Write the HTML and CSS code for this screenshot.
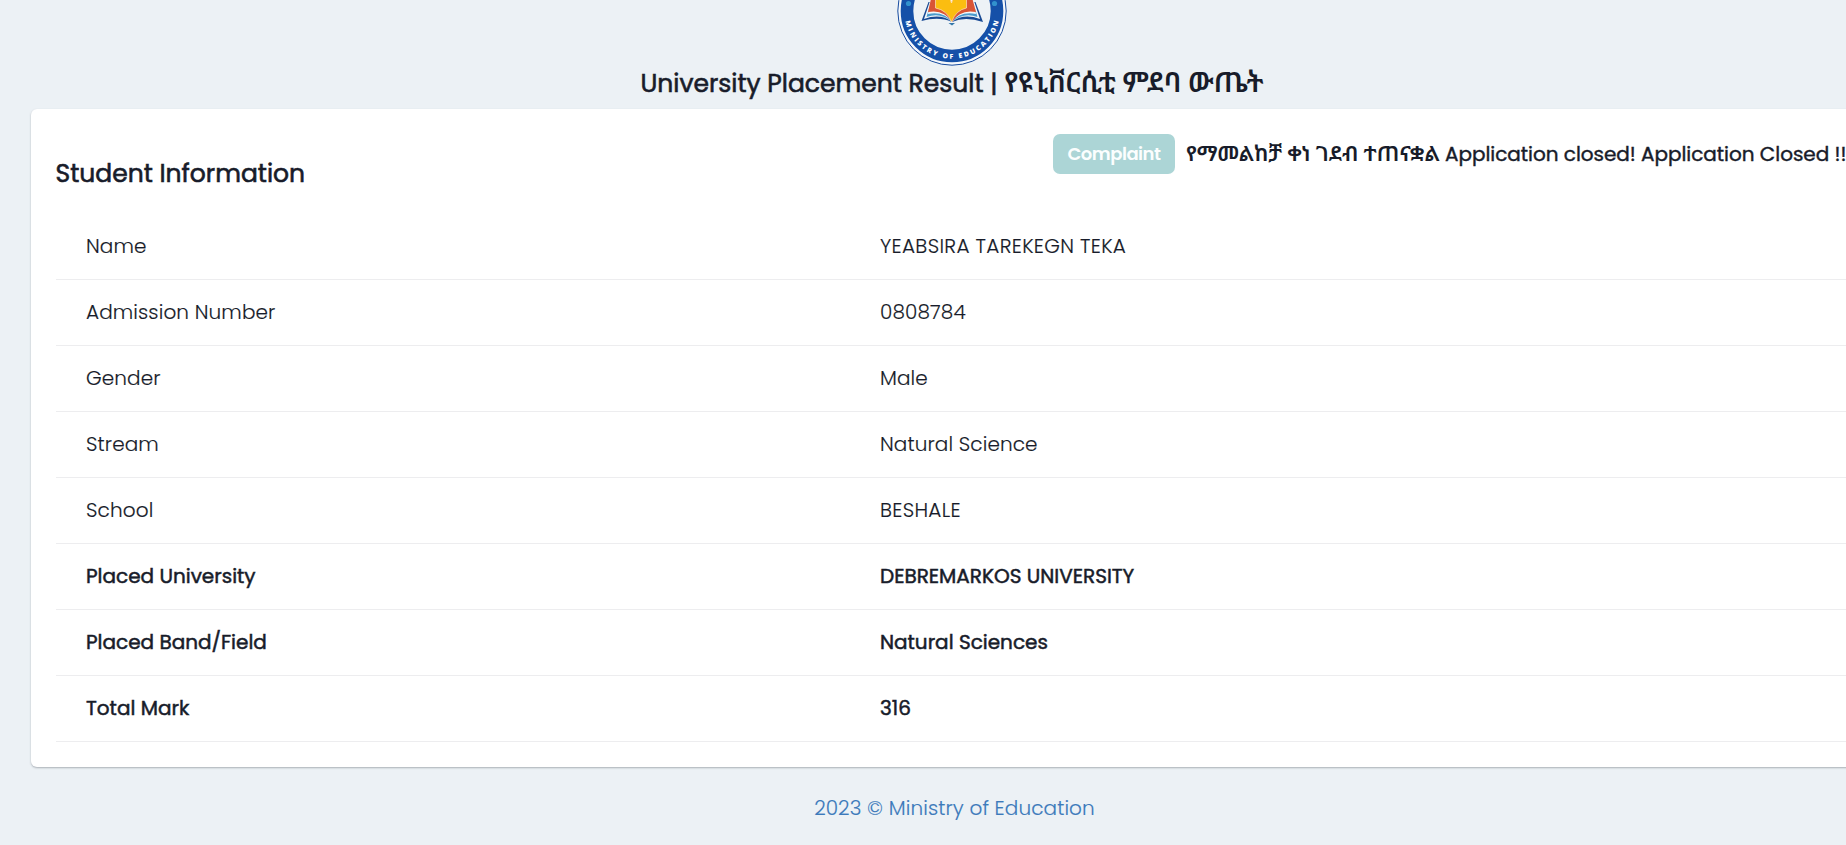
FILE: index.html
```html
<!DOCTYPE html>
<html lang="en">
<head>
<meta charset="utf-8">
<title>University Placement Result</title>
<link rel="stylesheet" href="styles.css">
</head>
<body>
<header class="header">
  <svg class="logo" viewBox="0 0 110 110" aria-label="Ministry of Education">
    <circle cx="55" cy="55" r="54.2" fill="#f5f8fb" stroke="#164b9f" stroke-width="1"/>
    <circle cx="55" cy="55" r="45" fill="#edf2f6" stroke="#1550a8" stroke-width="12.6"/>
    <path d="M24.5 65L31.5 46H78.5L86 66Q68 60 55 66Q42 60 24.5 65Z" fill="#194a94"/>
    <path d="M27 63L33 45H77L83 63Q66 57 55 66Q44 57 27 63Z" fill="#f3f7fa"/>
    <path d="M29.500 61L34 46H76L80.500 61Q66 56 55 66Q44 56 29.500 61Z" fill="#4a9bcd"/>
    <path d="M31 58L35 36H75L79 58Q63 55 55 66Q47 55 31 58Z" fill="#f3f7fa"/>
    <path d="M31 56L36 34H73L79 56Q63 53 55 66Q47 53 31 56Z" fill="#d95435"/>
    <path d="M38.500 52V28Q51 34 54.500 47Q58 34 69.500 28V52Q59 54 54.500 66Q50 54 38.500 52Z" fill="#fbbd10" stroke="#fdeeda" stroke-width=".6"/>
    <path d="M51 34Q53 40 54.500 47Q56 40 58 34Z" fill="#fff7de"/>
    <path d="M51.500 67H58L55 69.500Z" fill="#3478aa"/>
    <circle cx="11.5" cy="47.5" r="2.6" fill="#3291cd"/>
    <circle cx="97.5" cy="47.5" r="2.6" fill="#3291cd"/>
    <path id="ring" d="M7.2 55A47.8 47.8 0 0 0 102.8 55" fill="none"/>
    <text class="logo-text"><textPath href="#ring" startOffset="50%" text-anchor="middle" textLength="129">MINISTRY OF EDUCATION</textPath></text>
  </svg>
  <h1 class="title"><span class="title-en">University Placement Result | </span><span class="title-am">የዩኒቨርሲቲ ምደባ ውጤት</span></h1>
</header>
<main class="card">
  <div class="card-head">
    <h2 class="heading">Student Information</h2>
    <div class="actions">
      <button class="complaint" disabled>Complaint</button>
      <span class="notice"><span class="notice-am">የማመልከቻ ቀነ ገደብ ተጠናቋል </span><span class="notice-en">Application closed! Application Closed !!</span></span>
    </div>
  </div>
  <dl class="table">
    <div class="row"><dt>Name</dt><dd class="caps">YEABSIRA TAREKEGN TEKA</dd></div>
    <div class="row"><dt>Admission Number</dt><dd>0808784</dd></div>
    <div class="row"><dt>Gender</dt><dd>Male</dd></div>
    <div class="row"><dt>Stream</dt><dd>Natural Science</dd></div>
    <div class="row"><dt>School</dt><dd class="caps">BESHALE</dd></div>
    <div class="row strong"><dt>Placed University</dt><dd>DEBREMARKOS UNIVERSITY</dd></div>
    <div class="row strong"><dt>Placed Band/Field</dt><dd>Natural Sciences</dd></div>
    <div class="row strong"><dt>Total Mark</dt><dd>316</dd></div>
  </dl>
</main>
<footer class="footer"><a class="credit">2023 © Ministry of Education</a></footer>
</body>
</html>
```
FILE: styles.css
```css
* { box-sizing: border-box; }
body {
  margin: 0;
  height: 845px;
  overflow: hidden;
  background: #ecf1f5;
  color: #181c2a;
  font-family: Poppins, Inter, "Noto Sans Ethiopic", "Noto Sans", sans-serif;
  font-size: 20px;
  font-weight: 300;
}
.header {
  display: flex;
  flex-direction: column;
  align-items: center;
  width: 1904px;
  margin-top: -44px;
}
.logo { width: 110px; height: 110px; }
.logo-text { font: 800 6.8px "Open Sans", sans-serif; fill: #fff; }
.title {
  margin: 0;
  height: 43px;
  line-height: 36px;
  font-size: 25px;
  font-weight: 400;
  white-space: pre;
  -webkit-text-stroke: .6px currentColor;
}
.title-am { font-size: 28px; font-weight: 600; line-height: 30px; -webkit-text-stroke: 0; }
.card {
  width: 1843px;
  height: 658px;
  margin-left: 31px;
  padding: 25px;
  background: #fff;
  border-radius: 6px;
  box-shadow: 0 1px 2px rgba(45, 55, 65, .35);
}
.card-head { display: flex; justify-content: space-between; height: 80px; }
.heading {
  margin: 22px 0 0 -.5px;
  font-size: 25px;
  line-height: 36px;
  font-weight: 400;
  -webkit-text-stroke: .6px currentColor;
}
.actions { display: flex; width: 796px; height: 40px; gap: 11px; }
.complaint {
  flex: none;
  width: 122px;
  padding: 0 0 2px;
  border: 0;
  border-radius: 7px;
  background: #acd5d6;
  color: #fbfefe;
  font: inherit;
  font-size: 18px;
  font-weight: 600;
  letter-spacing: -.5px;
}
.notice { white-space: pre; line-height: 40px; font-weight: 400; -webkit-text-stroke: .4px currentColor; }
.notice-am { font-size: 21.7px; font-weight: 600; line-height: 30px; -webkit-text-stroke: 0; }
.notice-en { letter-spacing: -.03px; }
.table { margin: 0; }
.row {
  display: grid;
  grid-template-columns: 794px 1fr;
  height: 66px;
  padding-left: 30px;
  border-bottom: 1px solid #ededef;
  line-height: 65px;
  letter-spacing: .12px;
  -webkit-text-stroke: .15px currentColor;
}
.row dd { margin: 0; }
.caps { letter-spacing: .33px; }
.strong { font-weight: 400; letter-spacing: 0; -webkit-text-stroke: .5px currentColor; }
.footer { display: flex; justify-content: center; width: 1909px; padding-top: 21px; }
.credit { color: #3c7abb; line-height: 40px; letter-spacing: .12px; -webkit-text-stroke: .15px currentColor; }
```
